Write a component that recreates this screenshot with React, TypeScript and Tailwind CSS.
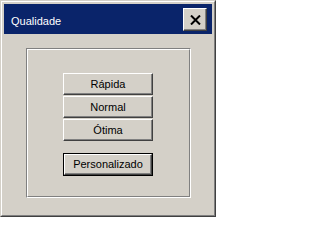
import React from 'react';

// Win2000-style dialog: "Qualidade"

const btn3d =
  'border border-t-white border-l-white border-r-[#404040] border-b-[#404040] shadow-[inset_-1px_-1px_0_#808080] bg-[#d4d0c8]';

function CloseGlyph() {
  return (
    <svg width="11" height="10" viewBox="0 0 11 10" className="block">
      <path d="M1 0.5 L10 9.5 M10 0.5 L1 9.5" stroke="#000" strokeWidth="2" strokeLinecap="butt" />
    </svg>
  );
}

function OptionButton({ label }: { label: string }) {
  return (
    <button className={`${btn3d} w-[90px] h-[22px] flex items-center justify-center text-[11px] text-black`}>
      {label}
    </button>
  );
}

export default function App() {
  return (
    <div
      className="w-[216px] h-[217px] bg-[#d4d0c8] border-t border-l border-r border-b border-t-[#d4d0c8] border-l-[#d4d0c8] border-r-[#404040] border-b-[#404040]"
      style={{ fontFamily: '"Liberation Sans", Arial, sans-serif' }}
    >
      <div className="h-full border border-t-white border-l-white border-r-[#808080] border-b-[#808080] p-[2px] flex flex-col">
        {/* Title bar */}
        <div className="h-[30px] bg-[#0a246a] flex items-start justify-between pl-[7px] pr-[5px]">
          <span className="text-white text-[11px] leading-none mt-[12px]">Qualidade</span>
          <button className={`${btn3d} w-[24px] h-[23px] mt-[4px] flex items-center justify-center`}>
            <CloseGlyph />
          </button>
        </div>

        {/* Group box */}
        <div className="mt-[14px] ml-[22px] w-[165px] h-[150px] border border-t-[#808080] border-l-[#808080] border-r-white border-b-white">
          <div className="h-full border border-t-white border-l-white border-r-[#808080] border-b-[#808080] pt-[23px] pl-[35px] flex flex-col">
            <div className="flex flex-col gap-[1px]">
              <OptionButton label="Rápida" />
              <OptionButton label="Normal" />
              <OptionButton label="Ótima" />
            </div>
            <div className="mt-[12px] w-[90px] h-[23px] border border-black flex">
              <button className={`${btn3d} flex-1 flex items-center justify-center text-[11px] text-black`}>
                Personalizado
              </button>
            </div>
          </div>
        </div>
      </div>
    </div>
  );
}
